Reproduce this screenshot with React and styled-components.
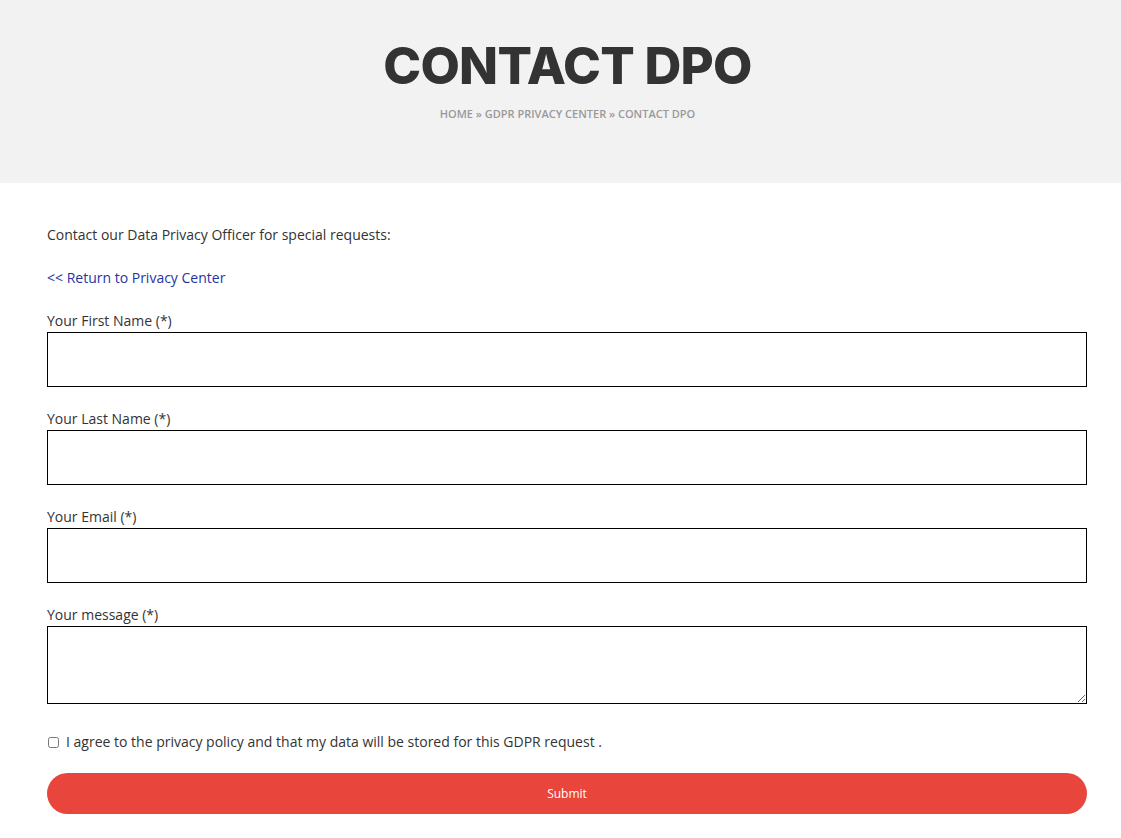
import React from 'react';
import styled, { createGlobalStyle } from 'styled-components';

const GlobalStyle = createGlobalStyle`
  html, body {
    margin: 0;
    padding: 0;
    background: #fff;
  }
  body {
    font-family: "Open Sans", "Liberation Sans", sans-serif;
    color: #333;
  }
`;

const fields = [
  { label: 'Your First Name (*)', type: 'text' },
  { label: 'Your Last Name (*)', type: 'text' },
  { label: 'Your Email (*)', type: 'email' },
];

const App = () => (
  <>
    <GlobalStyle />
    <Header>
      <Title>CONTACT DPO</Title>
      <Breadcrumb>HOME » GDPR PRIVACY CENTER » CONTACT DPO</Breadcrumb>
    </Header>
    <Main>
      <Intro>Contact our Data Privacy Officer for special requests:</Intro>
      <BackLink href="#">&lt;&lt; Return to Privacy Center</BackLink>
      <Form onSubmit={(e) => e.preventDefault()}>
        {fields.map((f) => (
          <Field key={f.label}>
            <Label>{f.label}</Label>
            <Input type={f.type} />
          </Field>
        ))}
        <Field>
          <Label>Your message (*)</Label>
          <TextArea />
        </Field>
        <Consent>
          <Checkbox type="checkbox" />
          I agree to the privacy policy and that my data will be stored for this GDPR request .
        </Consent>
        <Submit type="submit">Submit</Submit>
      </Form>
    </Main>
  </>
);

export default App;

const Header = styled.header`
  height: 183px;
  background: #f2f2f2;
  display: flex;
  flex-direction: column;
  align-items: center;
  box-sizing: border-box;
  padding: 36px 0 0 14px;
`;

const Title = styled.h1`
  margin: 0;
  font-family: "Inter", "DejaVu Sans", sans-serif;
  font-weight: 800;
  font-size: 51px;
  line-height: 60px;
  letter-spacing: -0.7px;
  color: #333;
`;

const Breadcrumb = styled.div`
  margin-top: 11px;
  font-size: 11px;
  font-weight: 600;
  color: #999;
  line-height: 14px;
`;

const Main = styled.main`
  padding: 42px 34px 0 47px;
  font-size: 14px;
  line-height: 20px;
`;

const Intro = styled.p`
  margin: 0 0 23px;
`;

const BackLink = styled.a`
  display: block;
  color: #1f35a8;
  text-decoration: none;
  margin-bottom: 23px;
`;

const Form = styled.form`
  display: flex;
  flex-direction: column;
`;

const Field = styled.div`
  display: flex;
  flex-direction: column;
  margin-bottom: 22px;
`;

const Label = styled.label`
  line-height: 20px;
  margin-bottom: 1px;
`;

const Input = styled.input`
  box-sizing: border-box;
  height: 55px;
  width: 100%;
  border: 1px solid #000;
  border-radius: 0;
  outline: none;
  padding: 0 10px;
  font: inherit;
`;

const TextArea = styled.textarea`
  box-sizing: border-box;
  height: 78px;
  width: 100%;
  border: 1px solid #000;
  border-radius: 0;
  outline: none;
  padding: 8px 10px;
  font: inherit;
`;

const Consent = styled.label`
  display: flex;
  align-items: center;
  margin-top: 6px;
  line-height: 20px;
`;

const Checkbox = styled.input`
  margin: 0 7px 0 1px;
  width: 11px;
  height: 11px;
`;

const Submit = styled.button`
  margin-top: 21px;
  height: 41px;
  width: 100%;
  border: none;
  border-radius: 21px;
  background: #e8453c;
  color: #fff;
  font-family: "Open Sans", "Liberation Sans", sans-serif;
  font-size: 12px;
  cursor: pointer;
`;
